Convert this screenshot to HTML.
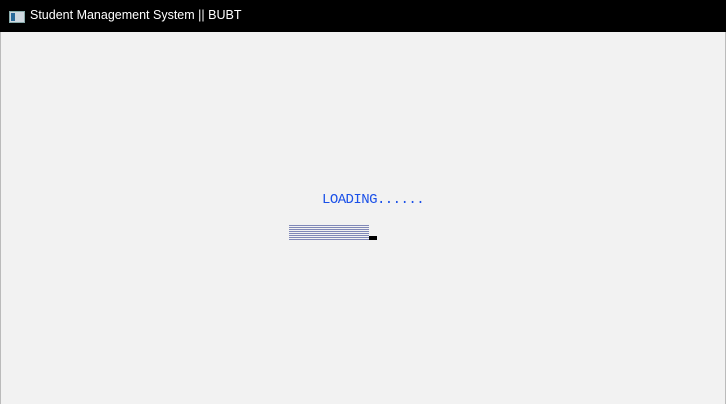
<html><head><style>
body{margin:0;width:726px;height:404px;background:#f2f2f2;position:relative;overflow:hidden;font-family:"Liberation Sans",sans-serif}
.t{position:absolute;left:0;top:0;width:726px;height:32px;background:#000}
.t span{position:absolute;left:30px;top:8px;color:#fff;font-size:12.5px}
.ic{position:absolute;left:9px;top:11px;width:14px;height:10px;background:#cfd8e0;border:1px solid #8aa}
.ic:before{content:"";position:absolute;left:1px;top:1px;width:4px;height:8px;background:#2a6a9a}
.bl{position:absolute;left:0;top:32px;width:1px;height:372px;background:#bbb}
.br{position:absolute;right:0;top:32px;width:1px;height:372px;background:#bbb}
.ld{position:absolute;left:322px;top:192px;font-family:"Liberation Mono",monospace;font-size:14px;letter-spacing:-0.55px;color:#1a50e8}
.pb{position:absolute;left:289px;top:225px;width:80px;height:15px;background:repeating-linear-gradient(#8088b8 0 1px,#f2f2f2 1px 2px)}
.cur{position:absolute;left:369px;top:236px;width:8px;height:4px;background:#000}
</style></head><body>
<div class="t"><div class="ic"></div><span>Student Management System || BUBT</span></div>
<div class="bl"></div><div class="br"></div>
<div class="ld">LOADING......</div>
<div class="pb"></div><div class="cur"></div>
</body></html>
